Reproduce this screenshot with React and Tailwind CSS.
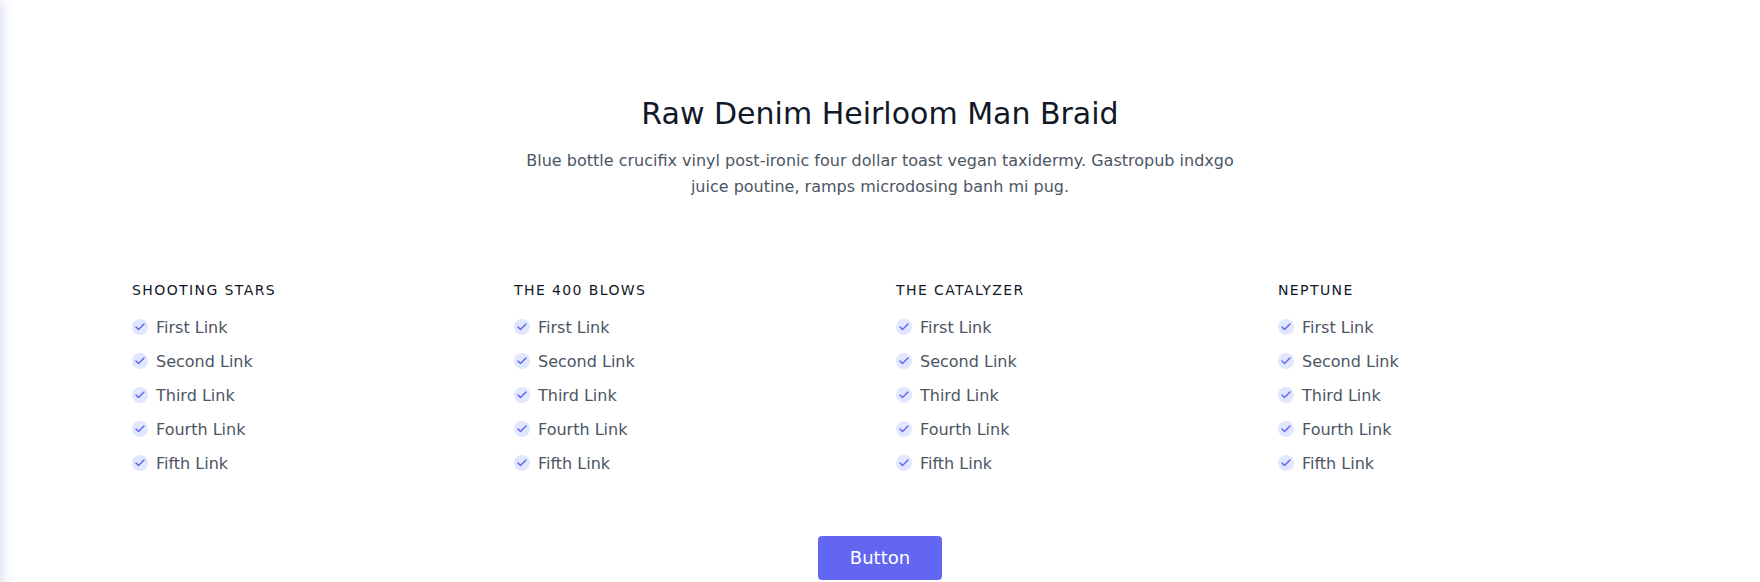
const columns = ['SHOOTING STARS', 'THE 400 BLOWS', 'THE CATALYZER', 'NEPTUNE'];
const links = ['First Link', 'Second Link', 'Third Link', 'Fourth Link', 'Fifth Link'];

function Check() {
  return (
    <span className="bg-[#e0e7ff] text-[#6366f1] w-4 h-4 mr-2 rounded-full inline-flex items-center justify-center">
      <svg fill="none" stroke="currentColor" strokeLinecap="round" strokeLinejoin="round" strokeWidth="3" className="w-3 h-3" viewBox="0 0 24 24">
        <path d="M20 6L9 17l-5-5" />
      </svg>
    </span>
  );
}

export default function App() {
  return (
    <div className="relative h-[582px] overflow-hidden bg-white font-['DejaVu_Sans',sans-serif] text-[#4b5563]">
      <div className="absolute top-0 -bottom-8 -left-4 w-4 shadow-[0_0_15px_#cbd5e6]" />
      <section className="w-[1536px] mx-auto px-5 py-24">
        <div className="text-center mb-20">
          <h1 className="text-3xl leading-9 font-medium text-center text-[#111827] mb-4">Raw Denim Heirloom Man Braid</h1>
          <p className="text-base leading-relaxed w-[720px] mx-auto">
            Blue bottle crucifix vinyl post-ironic four dollar toast vegan taxidermy. Gastropub indxgo juice poutine, ramps microdosing banh mi pug.
          </p>
        </div>
        <div className="flex flex-wrap -mx-4 text-left">
          {columns.map((title) => (
            <div key={title} className="w-1/4 px-4">
              <h2 className="font-medium text-[#111827] tracking-widest text-sm mb-4">{title}</h2>
              <nav className="flex flex-col items-start gap-2.5">
                {links.map((link) => (
                  <a key={link}>
                    <Check />
                    {link}
                  </a>
                ))}
              </nav>
            </div>
          ))}
        </div>
        <button className="flex mx-auto mt-15 text-white bg-[#6366f1] py-2 px-8 rounded text-lg">Button</button>
      </section>
    </div>
  );
}
